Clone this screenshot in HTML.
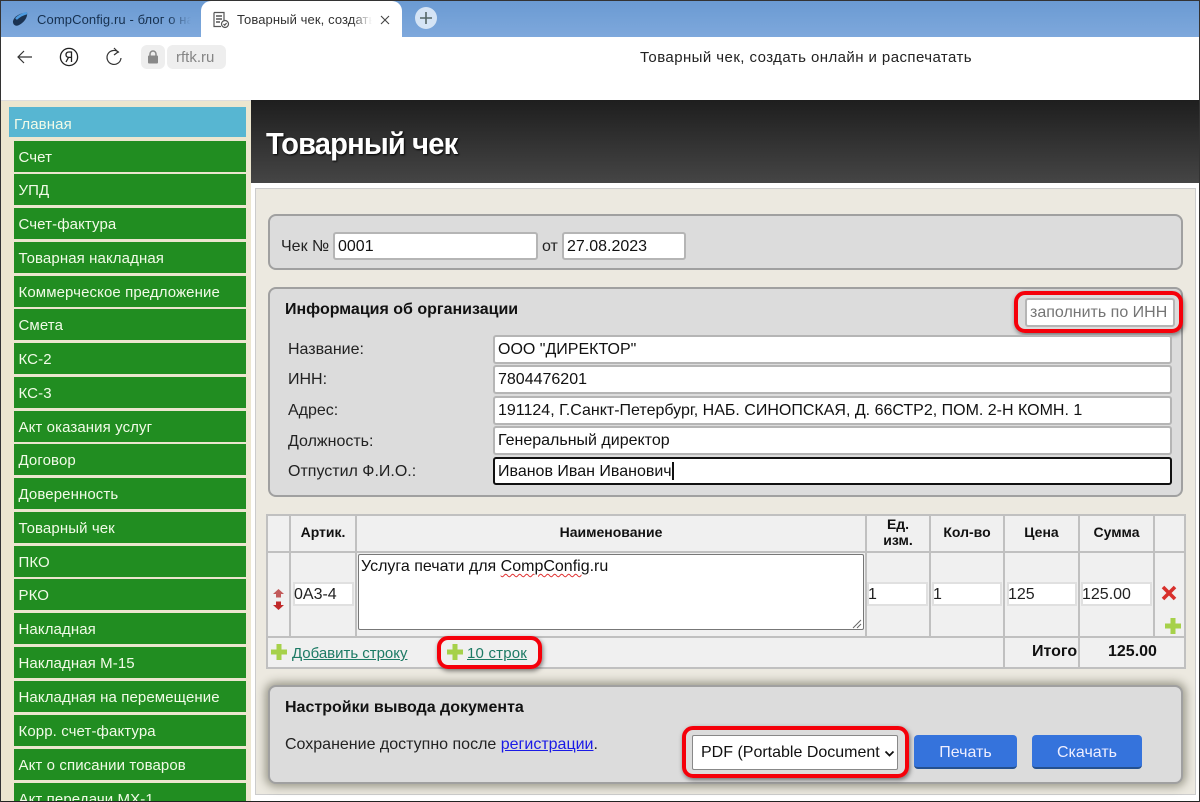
<!DOCTYPE html>
<html><head><meta charset="utf-8"><style>
*{box-sizing:border-box}
html,body{margin:0;padding:0;width:1200px;height:802px;overflow:hidden;background:#fff;font-family:"Liberation Sans",sans-serif;color:#111}
#w{position:relative;width:1200px;height:802px;overflow:hidden}
.a{position:absolute}
.t{position:absolute;white-space:nowrap}
.m{position:absolute;left:14px;width:232px;height:31px;background:#218d21;color:#f2fbe8;font-size:15px;line-height:34px;padding-left:4.5px;white-space:nowrap;letter-spacing:.1px;overflow:hidden}
.i{position:absolute;background:#fff;border:2px solid #b5b5b5;border-radius:3px;font-size:16px;line-height:26px;padding-left:3px;white-space:nowrap;color:#111;overflow:hidden}
.c{position:absolute;background:#fff;border:2px solid #e0e0e0;font-size:16px;line-height:22px;padding-left:0;text-indent:-1px;color:#222}
.p{position:absolute;background:#dcdcdc;border:2px solid #a0a0a0;border-radius:8px}
.h{position:absolute;font-weight:bold;font-size:14px;text-align:center;line-height:16px}
.v{position:absolute;width:2px;background:#c0c0c0}
.r{position:absolute;border:4px solid #f5000a;border-radius:11px;box-shadow:1px 2px 5px rgba(0,0,0,.5)}
.b{position:absolute;background:#3573dc;border-bottom:2px solid #24508f;border-radius:4px;color:#eef;font-size:16px;text-align:center;line-height:36px}
</style></head><body><div id="w">
<!-- browser chrome -->
<div class="a" style="left:0;top:0;width:1200px;height:37px;background:linear-gradient(#6a9ad2,#7ea8dc)"></div>
<div class="a" style="left:201px;top:1px;width:201px;height:36px;background:#fff;border-radius:10px 10px 0 0"></div>
<svg class="a" style="left:12px;top:12px" width="16" height="15" viewBox="0 0 16 15"><path d="M1 9C2 5 7 1 15 0.500C16 5 12 11 6 13.500C3 14.500 0.500 12 1 9Z" fill="#1b3352"/><path d="M4 7C7 4 11 2 15 1" stroke="#4d9be0" stroke-width="2.500" fill="none"/></svg>
<div class="t" style="left:37px;top:12px;font-size:13px;line-height:16px;color:#16304f;width:154px;overflow:hidden;letter-spacing:.1px;-webkit-mask-image:linear-gradient(90deg,#000 85%,transparent)">CompConfig.ru - блог о настройке</div>
<svg class="a" style="left:212px;top:11px" width="18" height="18" viewBox="0 0 18 18" fill="none" stroke="#555" stroke-width="1.2"><path d="M2 1.500H12V9M2 1.500V15.500H9"/><path d="M4 5H10M4 8H10M4 11H8" stroke-width="1.500"/><circle cx="13" cy="13" r="3.500" fill="#fff"/><path d="M11.500 13L12.700 14.200L14.600 12"/></svg>
<div class="t" style="left:237px;top:12px;font-size:13px;line-height:16px;color:#333;width:135px;overflow:hidden;letter-spacing:.1px;-webkit-mask-image:linear-gradient(90deg,#000 85%,transparent)">Товарный чек, создать онлайн</div>
<svg class="a" style="left:379px;top:14px" width="12" height="12" viewBox="0 0 12 12"><path d="M2 2L10 10M10 2L2 10" stroke="#444" stroke-width="1.100"/></svg>
<div class="a" style="left:415px;top:7px;width:22px;height:22px;border-radius:50%;background:#d5e4f5"></div>
<svg class="a" style="left:419px;top:11px" width="14" height="14" viewBox="0 0 14 14"><path d="M7 1V13M1 7H13" stroke="#566" stroke-width="1.600"/></svg>
<svg class="a" style="left:16px;top:48px" width="18" height="18" viewBox="0 0 18 18" fill="none" stroke="#333" stroke-width="1.200"><path d="M16 9H2M8 3L2 9L8 15"/></svg>
<svg class="a" style="left:59px;top:47px" width="20" height="20" viewBox="0 0 20 20" fill="none" stroke="#222" stroke-width="1.300"><circle cx="10" cy="10" r="8.600"/><path d="M12.500 15V5H10C8 5 7 6.200 7 7.800C7 9.400 8 10.400 10 10.400H12.500M9.500 10.400L7 15"/></svg>
<svg class="a" style="left:105px;top:47px" width="18" height="20" viewBox="0 0 18 20" fill="none" stroke="#333" stroke-width="1.200"><path d="M14 5.500A7 7 0 1 0 16 11"/><path d="M9 1L13 5L9 8"/></svg>
<div class="a" style="left:141px;top:45px;width:24px;height:24px;background:#eee;border-radius:6px"></div>
<svg class="a" style="left:147px;top:50px" width="12" height="14" viewBox="0 0 12 14"><rect x="1" y="5.500" width="10" height="8" rx="1" fill="#888"/><path d="M3 6V4A3 3 0 0 1 9 4V6" fill="none" stroke="#888" stroke-width="1.500"/></svg>
<div class="a" style="left:167px;top:45px;width:59px;height:24px;background:#eee;border-radius:6px"></div>
<div class="t" style="left:176px;top:49px;font-size:15px;line-height:17px;color:#858585">rftk.ru</div>
<div class="t" style="left:640px;top:49px;font-size:15px;line-height:18px;color:#222;letter-spacing:.43px">Товарный чек, создать онлайн и распечатать</div>
<!-- sidebar -->
<div class="a" style="left:0;top:100px;width:251px;height:702px;background:#ece6cf;border-top:1px solid #ddd"></div>
<div class="m" style="left:9px;width:237px;top:107px;height:30px;background:#57b6d2;padding-left:5px;line-height:36px">Главная</div>
<div class="m" style="top:141px">Счет</div>
<div class="m" style="top:174px">УПД</div>
<div class="m" style="top:208px">Счет-фактура</div>
<div class="m" style="top:242px">Товарная накладная</div>
<div class="m" style="top:276px">Коммерческое предложение</div>
<div class="m" style="top:309px">Смета</div>
<div class="m" style="top:343px">КС-2</div>
<div class="m" style="top:377px">КС-3</div>
<div class="m" style="top:411px">Акт оказания услуг</div>
<div class="m" style="top:444px">Договор</div>
<div class="m" style="top:478px">Доверенность</div>
<div class="m" style="top:512px">Товарный чек</div>
<div class="m" style="top:546px">ПКО</div>
<div class="m" style="top:579px">РКО</div>
<div class="m" style="top:613px">Накладная</div>
<div class="m" style="top:647px">Накладная М-15</div>
<div class="m" style="top:681px">Накладная на перемещение</div>
<div class="m" style="top:715px">Корр. счет-фактура</div>
<div class="m" style="top:749px">Акт о списании товаров</div>
<div class="m" style="top:783px">Акт передачи МХ-1</div>
<!-- header -->
<div class="a" style="left:251px;top:100px;width:949px;height:83px;background:linear-gradient(#1e1e1e,#454545)"></div>
<div class="t" style="left:266px;top:125px;font-size:31px;line-height:38px;font-weight:bold;color:#fff;letter-spacing:-.9px;text-shadow:1px 1px 2px #000;transform:scaleX(.94);transform-origin:0 0">Товарный чек</div>
<!-- content -->
<div class="a" style="left:255px;top:188px;width:941px;height:607px;background:#ece9e0;border:1px solid #ccc"></div>
<div class="p" style="left:268px;top:214px;width:915px;height:56px"></div>
<div class="t" style="left:281px;top:238px;font-size:16px;line-height:18px;color:#222">Чек №</div>
<div class="i" style="left:333px;top:232px;width:205px;height:28px">0001</div>
<div class="t" style="left:542px;top:238px;font-size:16px;line-height:18px;color:#222">от</div>
<div class="i" style="left:562px;top:232px;width:124px;height:28px">27.08.2023</div>
<div class="p" style="left:268px;top:287px;width:915px;height:210px"></div>
<div class="t" style="left:285px;top:301px;font-size:16px;line-height:18px;font-weight:bold">Информация об организации</div>
<div class="i" style="left:1025px;top:298px;width:150px;height:29px;color:#757575;padding-left:3px">заполнить по ИНН</div>
<div class="r" style="left:1014px;top:291px;width:169px;height:42px"></div>
<div class="t" style="left:288px;top:341px;font-size:16px;line-height:18px;color:#222">Название:</div>
<div class="t" style="left:288px;top:371px;font-size:16px;line-height:18px;color:#222">ИНН:</div>
<div class="t" style="left:288px;top:402px;font-size:16px;line-height:18px;color:#222">Адрес:</div>
<div class="t" style="left:288px;top:433px;font-size:16px;line-height:18px;color:#222">Должность:</div>
<div class="t" style="left:288px;top:463px;font-size:16px;line-height:18px;color:#222">Отпустил Ф.И.О.:</div>
<div class="i" style="left:493px;top:335px;width:679px;height:29px">ООО "ДИРЕКТОР"</div>
<div class="i" style="left:493px;top:365px;width:679px;height:29px">7804476201</div>
<div class="i" style="left:493px;top:396px;width:679px;height:29px">191124, Г.Санкт-Петербург, НАБ. СИНОПСКАЯ, Д. 66СТР2, ПОМ. 2-Н КОМН. 1</div>
<div class="i" style="left:493px;top:426px;width:679px;height:29px">Генеральный директор</div>
<div class="i" style="left:493px;top:457px;width:679px;height:28px;border-color:#111">Иванов Иван Иванович<span style="display:inline-block;width:2px;height:18px;background:#111;vertical-align:-4px"></span></div>
<!-- table -->
<div class="a" style="left:266px;top:514px;width:920px;height:155px;background:#f0f0f0;border:2px solid #c0c0c0"></div>
<div class="a" style="left:266px;top:551px;width:920px;height:2px;background:#c0c0c0"></div>
<div class="a" style="left:266px;top:636px;width:920px;height:2px;background:#c0c0c0"></div>
<div class="v" style="left:289px;top:514px;height:123px"></div>
<div class="v" style="left:355px;top:514px;height:123px"></div>
<div class="v" style="left:865px;top:514px;height:123px"></div>
<div class="v" style="left:929px;top:514px;height:123px"></div>
<div class="v" style="left:1003px;top:514px;height:155px"></div>
<div class="v" style="left:1078px;top:514px;height:155px"></div>
<div class="v" style="left:1153px;top:514px;height:123px"></div>
<div class="h" style="left:291px;top:524px;width:64px">Артик.</div>
<div class="h" style="left:357px;top:524px;width:508px">Наименование</div>
<div class="h" style="left:867px;top:516px;width:62px">Ед.<br>изм.</div>
<div class="h" style="left:931px;top:524px;width:72px">Кол-во</div>
<div class="h" style="left:1005px;top:524px;width:73px">Цена</div>
<div class="h" style="left:1080px;top:524px;width:73px">Сумма</div>
<div class="c" style="left:293px;top:582px;width:61px;height:24px">0А3-4</div>
<div class="a" style="left:358px;top:554px;width:506px;height:76px;background:#fff;border:1px solid #777;border-radius:2px"></div>
<div class="t" style="left:361px;top:558px;font-size:16px;line-height:18px;color:#111">Услуга печати для <span style="text-decoration:underline wavy #e03030 1px;text-underline-offset:2px">CompConfig</span>.ru</div>
<svg class="a" style="left:852px;top:619px" width="10" height="10" viewBox="0 0 10 10"><path d="M1 9L9 1M5 9L9 5" stroke="#666" stroke-width="1"/></svg>
<div class="c" style="left:867px;top:582px;width:61px;height:24px">1</div>
<div class="c" style="left:932px;top:582px;width:70px;height:24px">1</div>
<div class="c" style="left:1007px;top:582px;width:70px;height:24px">125</div>
<div class="c" style="left:1081px;top:582px;width:71px;height:24px">125.00</div>
<svg class="a" style="left:273px;top:589px" width="11" height="24" viewBox="0 0 11 24"><path d="M5.500 0L11 5H8V8.500H3V5H0Z" fill="#c25a5a"/><path d="M3 12.500H8V16H11L5.500 21L0 16H3Z" fill="#c02a2a"/></svg>
<svg class="a" style="left:1161px;top:585px" width="16" height="16" viewBox="0 0 16 16"><path d="M2 2L14 14M14 2L2 14" stroke="#d8302c" stroke-width="3.600"/></svg>
<svg class="a" style="left:1165px;top:618px" width="16" height="16" viewBox="0 0 16 16"><path d="M5.500 0H10.500V5.500H16V10.500H10.500V16H5.500V10.500H0V5.500H5.500Z" fill="#a6d14a"/></svg>
<svg class="a" style="left:271px;top:644px" width="16" height="16" viewBox="0 0 16 16"><path d="M5.500 0H10.500V5.500H16V10.500H10.500V16H5.500V10.500H0V5.500H5.500Z" fill="#a6d14a"/></svg>
<div class="t" style="left:292px;top:645px;font-size:15px;line-height:18px;color:#1c7a64;text-decoration:underline;letter-spacing:-.02px">Добавить строку</div>
<svg class="a" style="left:447px;top:644px" width="16" height="16" viewBox="0 0 16 16"><path d="M5.500 0H10.500V5.500H16V10.500H10.500V16H5.500V10.500H0V5.500H5.500Z" fill="#a6d14a"/></svg>
<div class="t" style="left:467px;top:645px;font-size:15px;line-height:18px;color:#1c7a64;text-decoration:underline;letter-spacing:.2px">10 строк</div>
<div class="r" style="left:437px;top:636px;width:105px;height:33px"></div>
<div class="t" style="left:1032px;top:643px;font-size:16px;line-height:18px;font-weight:bold">Итого</div>
<div class="t" style="left:1108px;top:643px;font-size:16px;line-height:18px;font-weight:bold">125.00</div>
<!-- settings -->
<div class="p" style="left:268px;top:685px;width:915px;height:99px;box-shadow:0 0 9px 3px rgba(60,60,40,.45)"></div>
<div class="t" style="left:285px;top:699px;font-size:16px;line-height:18px;font-weight:bold">Настройки вывода документа</div>
<div class="t" style="left:285px;top:736px;font-size:16px;line-height:18px;color:#222">Сохранение доступно после <a style="color:#1a1ae6;text-decoration:underline">регистрации</a>.</div>
<div class="a" style="left:692px;top:735px;width:206px;height:35px;background:#fff;border:1px solid #888;border-radius:2px"></div>
<div class="t" style="left:701px;top:744px;font-size:16px;line-height:18px;color:#111">PDF (Portable Document</div>
<svg class="a" style="left:884px;top:750px" width="11" height="8" viewBox="0 0 11 8"><path d="M1.500 1.500L5.500 5.500L9.500 1.500" stroke="#111" stroke-width="1.800" fill="none"/></svg>
<div class="r" style="left:682px;top:726px;width:227px;height:52px"></div>
<div class="b" style="left:914px;top:735px;width:103px;height:34px">Печать</div>
<div class="b" style="left:1032px;top:735px;width:110px;height:34px">Скачать</div>
<!-- frame -->
<div class="a" style="left:0;top:0;width:1200px;height:1px;background:#333"></div>
<div class="a" style="left:0;top:801px;width:1200px;height:1px;background:#222"></div>
<div class="a" style="left:0;top:0;width:1px;height:802px;background:#333"></div>
<div class="a" style="left:1199px;top:0;width:1px;height:802px;background:#333"></div>
</div></body></html>
